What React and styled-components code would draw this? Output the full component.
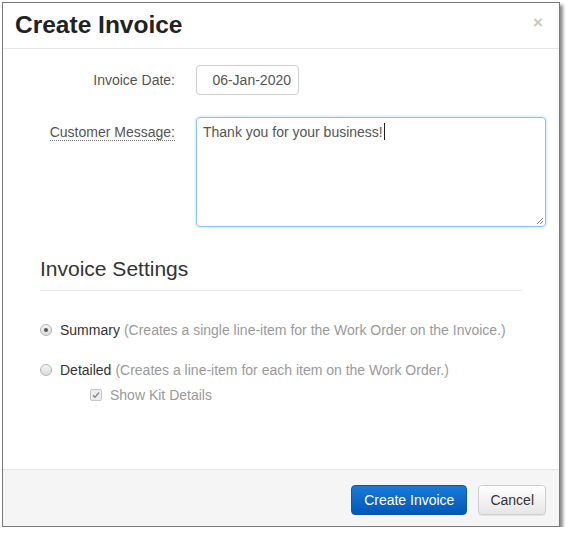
import React from "react";
import styled, { createGlobalStyle } from "styled-components";

const Global = createGlobalStyle`
  html, body { margin: 0; padding: 0; background: #ffffff; }
  body { font-family: "Liberation Sans", Arial, sans-serif; font-size: 14px; color: #333; }
  * { box-sizing: border-box; }
`;

const Dialog = styled.div`
  margin: 2px 0 0 2px;
  width: 558px;
  height: 525px;
  border: 1px solid #7a7a7a;
  background: #fff;
  box-shadow: 3px 3px 3px rgba(0, 0, 0, 0.45);
  display: flex;
  flex-direction: column;
`;

const Header = styled.div`
  height: 46px;
  flex: none;
  border-bottom: 1px solid #e8e8e8;
  display: flex;
  align-items: center;
  justify-content: space-between;
  padding: 0 16px 2px 12px;
`;

const Title = styled.h1`
  margin: 0;
  font-size: 24.5px;
  font-weight: bold;
  color: #222;
`;

const Close = styled.span`
  font-size: 17px;
  font-weight: bold;
  color: #c8c8c8;
  line-height: 1;
  margin-top: -4px;
`;

const Body = styled.div`
  flex: 1;
  padding: 16px 12px 0 0;
`;

const FormGrid = styled.div`
  display: grid;
  grid-template-columns: 172px 350px;
  column-gap: 21px;
  row-gap: 22px;
`;

const Label = styled.div`
  text-align: right;
  color: #555;
  line-height: 20px;
  align-self: ${(p) => (p.$top ? "start" : "center")};
  padding-top: ${(p) => (p.$top ? "5px" : "0")};
`;

const Abbr = styled.span`
  border-bottom: 1px dotted #777;
`;

const DateBox = styled.div`
  width: 103px;
  height: 30px;
  border: 1px solid #cfcfcf;
  border-radius: 4px;
  display: flex;
  align-items: center;
  justify-content: flex-end;
  padding-right: 7px;
  color: #555;
`;

const TextArea = styled.div`
  position: relative;
  height: 110px;
  border: 1px solid #86c4ee;
  border-radius: 4px;
  box-shadow: 0 0 3px rgba(102, 175, 233, 0.55);
  padding: 4px 6px;
  color: #555;
  line-height: 20px;
`;

const Caret = styled.span`
  display: inline-block;
  width: 1px;
  height: 17px;
  background: #222;
  vertical-align: -3px;
  margin-left: 1px;
`;

const Grip = styled.svg`
  position: absolute;
  right: 1px;
  bottom: 1px;
`;

const Section = styled.div`
  margin: 30px 25px 0 37px;
`;

const SectionTitle = styled.h2`
  margin: 0;
  font-size: 21px;
  font-weight: normal;
  color: #333;
  line-height: 24px;
  padding-bottom: 9px;
  border-bottom: 1px solid #e8e8e8;
`;

const Options = styled.div`
  display: flex;
  flex-direction: column;
  margin-top: 29px;
`;

const OptionRow = styled.div`
  display: flex;
  align-items: center;
  height: 20px;
  margin-top: ${(p) => p.$gap || 0}px;
  padding-left: ${(p) => p.$indent || 0}px;
`;

const Radio = styled.span`
  width: 12px;
  height: 12px;
  border-radius: 50%;
  border: 1px solid #b4b4b4;
  background: linear-gradient(#f4f4f4, #dcdcdc);
  display: inline-flex;
  align-items: center;
  justify-content: center;
  margin-right: 8px;
  flex: none;
  &::after {
    content: "";
    width: 4px;
    height: 4px;
    border-radius: 50%;
    background: ${(p) => (p.$checked ? "#555" : "transparent")};
  }
`;

const Check = styled.span`
  width: 12px;
  height: 12px;
  border: 1px solid #c6c6c6;
  border-radius: 2px;
  background: #ececec;
  display: inline-flex;
  align-items: center;
  justify-content: center;
  margin-right: 8px;
  flex: none;
`;

const OptName = styled.span`
  color: ${(p) => (p.$muted ? "#9a9a9a" : "#333")};
`;

const OptDesc = styled.span`
  color: #9a9a9a;
  margin-left: 4px;
`;

const Footer = styled.div`
  height: 57px;
  flex: none;
  border-top: 1px solid #e5e5e5;
  background: #f5f5f5;
  display: flex;
  align-items: center;
  justify-content: flex-end;
  gap: 11px;
  padding: 4px 13px 0 0;
`;

const Button = styled.button`
  height: 30px;
  padding: 0 ${(p) => (p.$primary ? "12px" : "11px")};
  border-radius: 4px;
  font-family: "Liberation Sans", Arial, sans-serif;
  font-size: 14px;
  cursor: pointer;
  border: 1px solid ${(p) => (p.$primary ? "#0a57a8" : "#cfcfcf")};
  color: ${(p) => (p.$primary ? "#fff" : "#333")};
  background: ${(p) =>
    p.$primary
      ? "linear-gradient(#1a7ad8, #0058b8)"
      : "linear-gradient(#ffffff, #e6e6e6)"};
  box-shadow: ${(p) => (p.$primary ? "none" : "0 1px 1px rgba(0,0,0,0.08)")};
`;

export default function App() {
  return (
    <>
      <Global />
      <Dialog>
        <Header>
          <Title>Create Invoice</Title>
          <Close>×</Close>
        </Header>
        <Body>
          <FormGrid>
            <Label>Invoice Date:</Label>
            <DateBox>06-Jan-2020</DateBox>
            <Label $top>
              <Abbr>Customer Message:</Abbr>
            </Label>
            <TextArea>
              Thank you for your business!
              <Caret />
              <Grip width="9" height="9" viewBox="0 0 9 9">
                <path d="M8 2 L2 8 M8 5 L5 8" stroke="#888" strokeWidth="1" />
              </Grip>
            </TextArea>
          </FormGrid>
          <Section>
            <SectionTitle>Invoice Settings</SectionTitle>
            <Options>
              <OptionRow>
                <Radio $checked />
                <OptName>Summary</OptName>
                <OptDesc>(Creates a single line-item for the Work Order on the Invoice.)</OptDesc>
              </OptionRow>
              <OptionRow $gap={20}>
                <Radio />
                <OptName>Detailed</OptName>
                <OptDesc>(Creates a line-item for each item on the Work Order.)</OptDesc>
              </OptionRow>
              <OptionRow $gap={5} $indent={50}>
                <Check>
                  <svg width="8" height="8" viewBox="0 0 8 8">
                    <path d="M1 4.2 L3 6.2 L7 1.5" stroke="#8a8a8a" strokeWidth="1.5" fill="none" />
                  </svg>
                </Check>
                <OptName $muted>Show Kit Details</OptName>
              </OptionRow>
            </Options>
          </Section>
        </Body>
        <Footer>
          <Button $primary>Create Invoice</Button>
          <Button>Cancel</Button>
        </Footer>
      </Dialog>
    </>
  );
}
